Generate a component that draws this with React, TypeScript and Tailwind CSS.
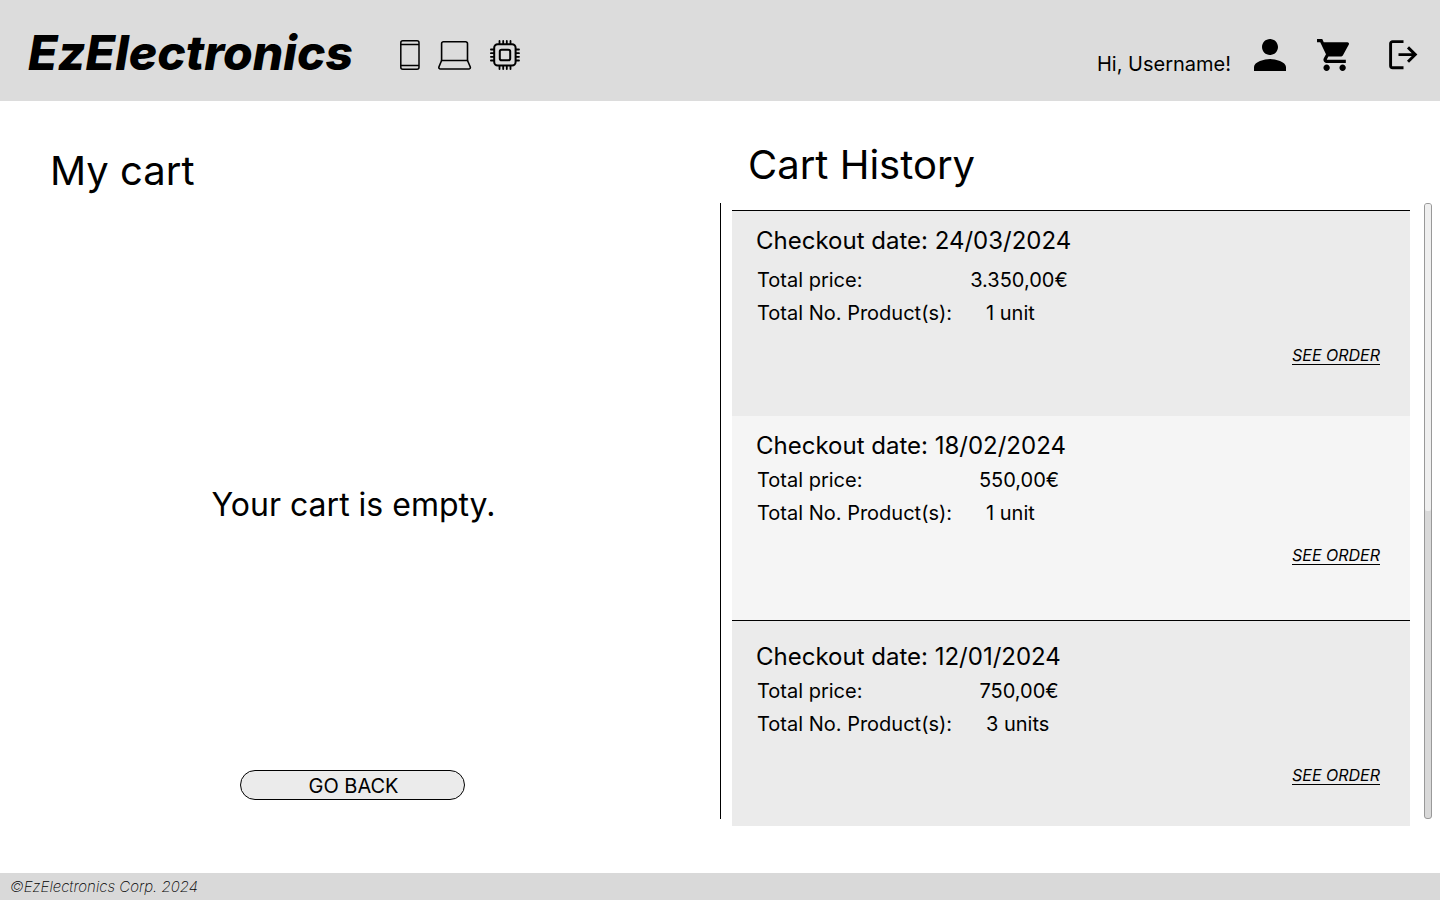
type Order = {
  date: string;
  price: string;
  units: string;
  card: string;
  details: string;
  action: string;
};

const orders: Order[] = [
  {
    date: "24/03/2024",
    price: "3.350,00€",
    units: "1 unit",
    card: "border-t border-black bg-[#ebebeb] pt-4 h-[206px]",
    details: "mt-[9px]",
    action: "mt-[13px]",
  },
  {
    date: "18/02/2024",
    price: "550,00€",
    units: "1 unit",
    card: "bg-[#f5f5f5] pt-4 h-[204px]",
    details: "mt-1",
    action: "mt-[13px]",
  },
  {
    date: "12/01/2024",
    price: "750,00€",
    units: "3 units",
    card: "border-t border-black bg-[#ebebeb] pt-[22px] h-[206px]",
    details: "mt-1",
    action: "mt-[22px]",
  },
];

function PhoneIcon() {
  return (
    <svg width="20" height="30" viewBox="0 0 20 30" fill="none" stroke="black" strokeWidth="1.5" aria-hidden="true">
      <rect x="0.8" y="0.8" width="18.2" height="28.4" rx="2" />
      <path d="M0.8 4.5h18.2M0.8 25.5h18.2" />
    </svg>
  );
}

function LaptopIcon() {
  return (
    <svg width="34" height="30" viewBox="0 0 34 30" fill="none" stroke="black" strokeWidth="1.6" strokeLinejoin="round" aria-hidden="true">
      <path d="M3.600 20.500V3.600a1.800 1.800 0 0 1 1.800-1.800h22.300a1.800 1.800 0 0 1 1.800 1.800V20.500z" />
      <path d="M3.600 20.500L1 26.700c-.5 1.400.2 2.300 1.500 2.300h28.200c1.300 0 2-.9 1.500-2.300L29.500 20.500" />
    </svg>
  );
}

function ChipIcon() {
  return (
    <svg width="32" height="32" viewBox="0 0 32 32" fill="none" stroke="black" strokeWidth="1.8" strokeLinecap="round" aria-hidden="true">
      <rect x="5.200" y="5.200" width="21.400" height="21.400" rx="3.500" strokeWidth="2" />
      <rect x="10.800" y="10.800" width="10.400" height="10.400" rx="1.800" strokeWidth="2" />
      <path d="M10.500 1.900v3M14.200 1.900v3M17.800 1.900v3M21.500 1.900v3M10.500 27v3M14.200 27v3M17.800 27v3M21.500 27v3M1.900 10.500h3M1.900 14.200h3M1.900 17.800h3M1.900 21.500h3M27 10.500h3M27 14.200h3M27 17.800h3M27 21.500h3" />
    </svg>
  );
}

function PersonIcon() {
  return (
    <svg width="32" height="32" viewBox="4 4 16 16" aria-hidden="true">
      <path d="M12 12c2.210 0 4-1.790 4-4s-1.790-4-4-4-4 1.790-4 4 1.790 4 4 4zm0 2c-2.670 0-8 1.340-8 4v2h16v-2c0-2.660-5.330-4-8-4z" />
    </svg>
  );
}

function CartIcon() {
  return (
    <svg width="33" height="32" viewBox="1 2 20.600 20" aria-hidden="true">
      <path d="M7 18c-1.100 0-1.990.9-1.990 2S5.900 22 7 22s2-.9 2-2-.9-2-2-2zM1 2v2h2l3.600 7.590-1.350 2.450c-.16.280-.25.610-.25.960 0 1.100.9 2 2 2h12v-2H7.420c-.14 0-.25-.11-.25-.25l.03-.12.9-1.630h7.450c.75 0 1.410-.41 1.750-1.030l3.580-6.490c.08-.14.120-.31.120-.480 0-.55-.45-1-1-1H5.210l-.94-2H1zm16 16c-1.100 0-1.990.9-1.990 2s.89 2 1.990 2 2-.9 2-2-.9-2-2-2z" />
    </svg>
  );
}

function LogoutIcon() {
  return (
    <svg width="29" height="30" viewBox="0 0 29 30" fill="none" stroke="black" strokeWidth="2.900" aria-hidden="true">
      <path d="M14.500 1.600H3.600a2 2 0 0 0-2 2v22.200a2 2 0 0 0 2 2h10.900" />
      <path d="M9.500 14.600h16.500M19 7.400l7.300 7.200-7.300 7.200" />
    </svg>
  );
}

function OrderCard({ order }: { order: Order }) {
  return (
    <li className={`flex flex-col pl-6 pr-[30px] ${order.card}`}>
      <h3 className="text-2xl leading-7">Checkout date: {order.date}</h3>
      <dl className={`grid grid-cols-[200px_124px] text-xl leading-[33px] pl-px ${order.details}`}>
        <dt>Total price:</dt>
        <dd className="text-center">{order.price}</dd>
        <dt>Total No. Product(s):</dt>
        <dd className="pl-[29px]">{order.units}</dd>
      </dl>
      <a href="#order" className={`self-end text-base leading-6 italic underline underline-offset-3 ${order.action}`}>
        SEE ORDER
      </a>
    </li>
  );
}

export default function App() {
  return (
    <div className="flex min-h-screen flex-col bg-white font-['Inter',sans-serif] text-black">
      <header className="flex h-[101px] items-center justify-between bg-[#dcdcdc] pl-7 pr-[22px] pb-[7px] pt-4">
        <div className="flex items-center">
          <a href="#home" className="pb-1 text-5xl leading-none font-extrabold italic">EzElectronics</a>
          <nav className="ml-[47px] flex items-center" aria-label="Categories">
            <a href="#phones" aria-label="Smartphones"><PhoneIcon /></a>
            <a href="#laptops" aria-label="Laptops" className="ml-[18px]"><LaptopIcon /></a>
            <a href="#components" aria-label="Components" className="ml-[17px]"><ChipIcon /></a>
          </nav>
        </div>
        <div className="flex items-center">
          <span className="pt-[18px] text-xl leading-6">Hi, Username!</span>
          <a href="#profile" aria-label="Profile" className="ml-[23px]"><PersonIcon /></a>
          <a href="#cart" aria-label="Cart" className="ml-[31px]"><CartIcon /></a>
          <button type="button" aria-label="Log out" className="ml-[39px]"><LogoutIcon /></button>
        </div>
      </header>

      <main className="grid flex-1 grid-cols-2">
        <section className="flex flex-col pt-[46px] pb-[73px]">
          <h1 className="pl-[50px] text-[40px] leading-12">My cart</h1>
          <div className="flex flex-1 flex-col items-center pr-[15px]">
            <p className="flex flex-1 items-center pt-11 pl-0.5 text-[32px] leading-10">Your cart is empty.</p>
            <button type="button" className="h-[30px] w-[225px] rounded-full border border-black bg-[#ebebeb] pt-0.5 pl-0.5 text-xl leading-6">
              GO BACK
            </button>
          </div>
        </section>

        <section className="flex flex-col pt-10 pb-[47px]">
          <h2 className="pl-7 text-[40px] leading-12">Cart History</h2>
          <div className="mt-[14px] flex flex-1 pr-2">
            <div className="mb-[7px] w-px bg-black" />
            <ul className="mt-[7px] ml-[11px] flex-1">
              {orders.map((order) => (
                <OrderCard key={order.date} order={order} />
              ))}
            </ul>
            <div className="mb-[7px] ml-[14px] w-2 rounded-[3px] border border-[#999999] bg-[#d9d9d9]">
              <div className="h-1/2 rounded-[2px] bg-[#efefef]" />
            </div>
          </div>
        </section>
      </main>

      <footer className="h-[27px] bg-[#d9d9d9] pl-[10px] text-[15px] leading-7 font-extralight italic">
        ©EzElectronics Corp. 2024
      </footer>
    </div>
  );
}
